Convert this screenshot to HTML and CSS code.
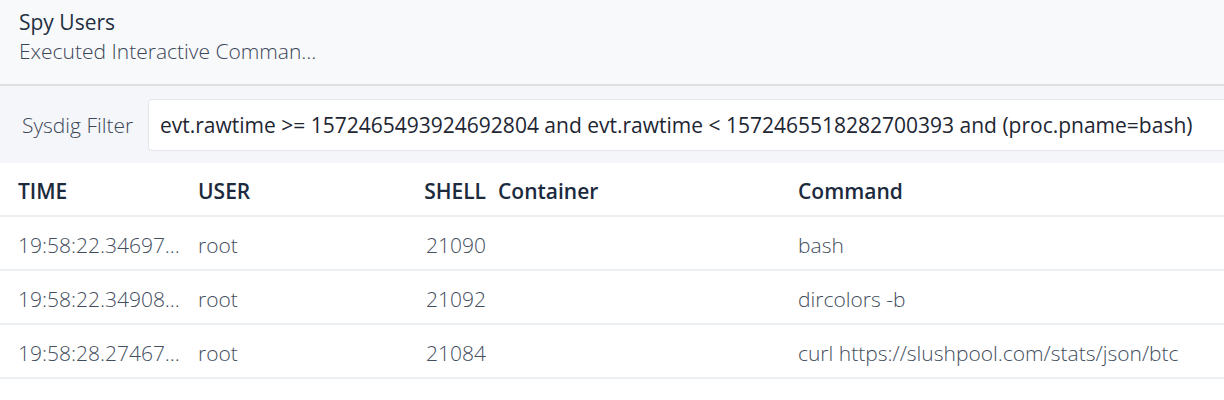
FILE: index.html
```html
<!DOCTYPE html>
<html>
<head>
<meta charset="utf-8">
<link rel="stylesheet" href="styles.css">
</head>
<body>
<div class="page">
  <header class="head">
    <div class="title">Spy Users</div>
    <div class="subtitle">Executed Interactive Comman…</div>
  </header>
  <div class="filter">
    <label class="filter-label">Sysdig Filter</label>
    <div class="filter-input">evt.rawtime &gt;= 1572465493924692804 and evt.rawtime &lt; 1572465518282700393 and (proc.pname=bash)</div>
  </div>
  <div class="table">
    <div class="row th">
      <div class="c time">TIME</div>
      <div class="c user">USER</div>
      <div class="c shell">SHELL</div>
      <div class="c cont">Container</div>
      <div class="c cmd">Command</div>
    </div>
    <div class="row">
      <div class="c time">19:58:22.34697…</div>
      <div class="c user">root</div>
      <div class="c shell">21090</div>
      <div class="c cont"></div>
      <div class="c cmd">bash</div>
    </div>
    <div class="row">
      <div class="c time">19:58:22.34908…</div>
      <div class="c user">root</div>
      <div class="c shell">21092</div>
      <div class="c cont"></div>
      <div class="c cmd">dircolors -b</div>
    </div>
    <div class="row">
      <div class="c time">19:58:28.27467…</div>
      <div class="c user">root</div>
      <div class="c shell">21084</div>
      <div class="c cont"></div>
      <div class="c cmd">curl https://slushpool.com/stats/json/btc</div>
    </div>
  </div>
</div>
</body>
</html>
```

FILE: styles.css
```css
html, body {
  margin: 0;
  padding: 0;
  background: #ffffff;
}
body {
  font-family: "Open Sans", "Noto Sans", sans-serif;
  width: 1224px;
  overflow: hidden;
}
.head {
  background: #f8f9fb;
  border-bottom: 2px solid #dfe1e3;
  padding: 8px 0 0 19px;
  height: 76px;
}
.title {
  font-size: 21px;
  line-height: 29px;
  color: #243042;
  font-weight: 400;
}
.subtitle {
  font-size: 21px;
  line-height: 29px;
  color: #3b4657;
  font-weight: 300;
  white-space: nowrap;
}
.filter {
  display: flex;
  align-items: center;
  height: 77px;
  background: #f4f6f9;
  padding-left: 22px;
}
.filter-label {
  font-size: 21px;
  font-weight: 300;
  color: #3b4657;
  width: 126px;
  flex: none;
}
.filter-input {
  flex: 1;
  min-width: 0;
  height: 52px;
  box-sizing: border-box;
  background: #fff;
  border: 1px solid #e4e6e9;
  border-right: none;
  border-radius: 4px 0 0 4px;
  padding-left: 11px;
  display: flex;
  align-items: center;
  font-size: 21px;
  color: #1e2633;
  white-space: nowrap;
  overflow: hidden;
}
.row {
  display: grid;
  grid-template-columns: 180px 180px 108px 300px 1fr;
  padding-left: 18px;
  padding-top: 3px;
  height: 49px;
  align-items: center;
  border-bottom: 2px solid #edf0f3;
  font-size: 21px;
  font-weight: 300;
  color: #424d5d;
}
.row.th {
  font-weight: 600;
  color: #1c2a3e;
}
.c {
  white-space: nowrap;
  overflow: hidden;
}
.shell {
  text-align: right;
}
.cont, .cmd {
  padding-left: 12px;
}
```
